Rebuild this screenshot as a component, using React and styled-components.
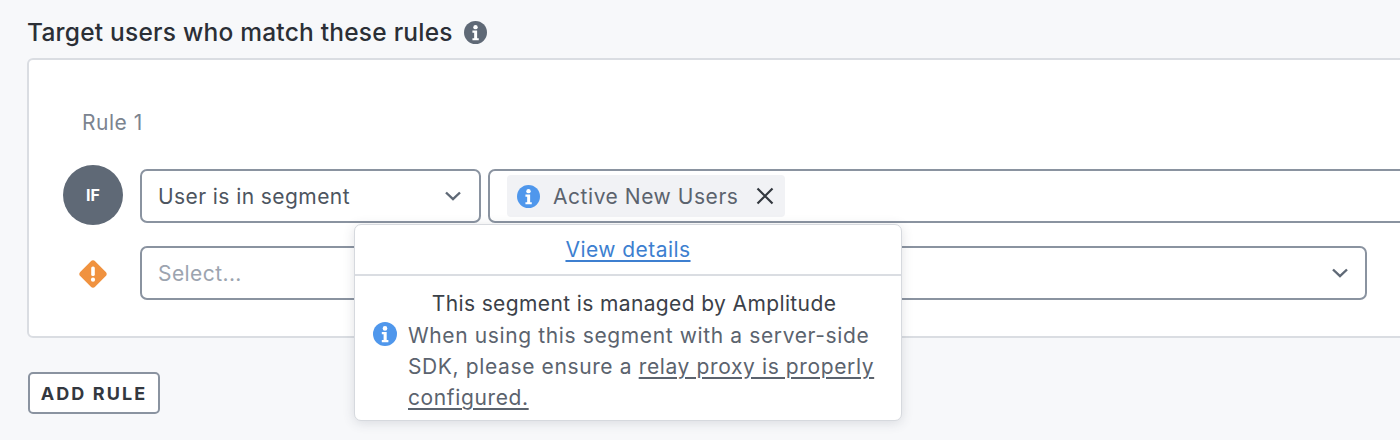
import React from "react";
import styled, { createGlobalStyle } from "styled-components";

const Global = createGlobalStyle`
  html, body { margin: 0; padding: 0; width: 1400px; height: 440px; overflow: hidden; background: #f7f8fa; }
  body { font-family: Inter, "Liberation Sans", sans-serif; -webkit-font-smoothing: antialiased; }
`;
const Page = styled.div`
  width: 1400px; height: 440px; box-sizing: border-box; padding: 16px 0 0 27px; overflow: hidden;
`;
const Heading = styled.div`
  display: flex; align-items: center; gap: 11px; height: 32px; margin-bottom: 10px;
`;
const Title = styled.h2`
  margin: 0; font-size: 24.5px; font-weight: 500; color: #2b2f36; line-height: 32px; letter-spacing: .22px;
`;
const Card = styled.section`
  position: relative; box-sizing: border-box; width: 1400px; height: 280px;
  background: #fff; border: 2px solid #dadde2; border-radius: 6px; padding: 50px 0 0 34px;
`;
const RuleLabel = styled.div`
  margin-left: 19px; font-size: 21px; letter-spacing: .5px; line-height: 26px; color: #7b8490; height: 26px; margin-bottom: 29px;
`;
const Row = styled.div`
  display: flex; align-items: center; height: ${p => p.$h}px; margin-bottom: ${p => p.$mb || 0}px;
`;
const Lead = styled.div`
  width: 60px; margin-right: 17px; margin-top: ${p => p.$mt || 0}px; display: flex; justify-content: center; align-items: center; flex: none;
`;
const IfBadge = styled.div`
  width: 60px; height: 60px; border-radius: 50%; background: #5f6976; color: #fff;
  display: flex; align-items: center; justify-content: center; font-size: 16px; font-weight: 700;
`;
const Control = styled.div`
  box-sizing: border-box; flex: none; width: ${p => p.$w}px; height: 54px;
  margin-right: ${p => p.$mr || 0}px; margin-top: ${p => p.$mt || 0}px;
  display: flex; align-items: center; justify-content: space-between;
  border: 2px solid #8a93a0; border-radius: 7px; background: #fff; padding: 0 ${p => p.$pr ?? 17}px 0 16px;
  font-size: 21px; letter-spacing: .42px; color: ${p => p.$muted ? "#9ca4af" : "#4d5560"};
`;
const Tag = styled.div`
  width: 278px; height: 42px; box-sizing: border-box; display: flex; align-items: center; gap: 13px;
  background: #f1f2f5; border-radius: 4px; padding: 0 10px; font-size: 21px; letter-spacing: .55px; color: #5b636e; white-space: nowrap;
`;
const TagClose = styled.svg`margin-left: 3px; flex: none;`;
const ValueBox = styled(Control)`justify-content: flex-start; padding-left: 17px;`;
const Popup = styled.div`
  position: absolute; left: 325px; top: 164px; width: 548px; height: 197px; box-sizing: border-box;
  background: #fff; border: 1px solid #d6d9de; border-radius: 7px; box-shadow: 0 2px 12px rgba(60,70,85,.16);
`;
const PopupHeader = styled.div`
  height: 51px; box-sizing: border-box; border-bottom: 2px solid #dadde2;
  display: flex; align-items: center; justify-content: center;
`;
const DetailsLink = styled.a`
  color: #3d7fd0; font-size: 21px; letter-spacing: .45px; text-decoration: underline; text-underline-offset: 3px;
`;
const PopupBody = styled.div`
  padding: 12px 18px 0 18px;
`;
const Managed = styled.div`
  text-align: center; font-size: 21px; letter-spacing: .38px; line-height: 32px; color: #3b4149; padding-left: 12px;
`;
const Note = styled.div`
  display: flex; align-items: flex-start; gap: 11px;
`;
const NoteIcon = styled.div`flex: none; padding-top: 2px; line-height: 0;`;
const NoteText = styled.div`
  font-size: 21px; letter-spacing: .62px; line-height: 31px; color: #5b636e;
  a { color: inherit; text-decoration: underline; text-underline-offset: 3px; }
`;
const AddRule = styled.button`
  display: block; box-sizing: border-box; margin-top: 34px; margin-left: 1px; width: 132px; height: 42px; padding: 0;
  background: #fff; border: 2px solid #8a93a0; border-radius: 5px;
  font-family: inherit; font-size: 18px; font-weight: 700; letter-spacing: 2.1px; color: #33383f;
`;

const InfoIcon = ({ color, size }) => (
  <svg width={size} height={size} viewBox="0 0 24 24" style={{ flex: "none", display: "block" }}>
    <circle cx="12" cy="12" r="12" fill={color} />
    <circle cx="12" cy="6.4" r="2.3" fill="#fff" />
    <path d="M8.8 10h4.9v8h1.7v2.2H8.8V18h1.8v-5.8H8.8z" fill="#fff" />
  </svg>
);
const Chevron = () => (
  <svg width="20" height="20" viewBox="0 0 20 20" fill="none">
    <path d="M3 6.5 10 13.2l7-6.7" stroke="#5f6976" strokeWidth="2.4" />
  </svg>
);
const WarnIcon = () => (
  <svg width="30" height="30" viewBox="0 0 30 30">
    <path d="M15 1.2c.9 0 1.5.4 2.1 1l10.7 10.7c1.2 1.2 1.2 3 0 4.2L17.1 27.8c-1.2 1.2-3 1.2-4.2 0L2.2 17.1c-1.2-1.2-1.2-3 0-4.2L12.9 2.2c.6-.6 1.2-1 2.1-1z" fill="#f0923f" />
    <rect x="13.2" y="7.5" width="3.6" height="9.5" rx="1.6" fill="#fff" />
    <circle cx="15" cy="20.7" r="2.1" fill="#fff" />
  </svg>
);

export default function App() {
  return (
    <Page>
      <Global />
      <Heading>
        <Title>Target users who match these rules</Title>
        <InfoIcon color="#5f6976" size={23} />
      </Heading>
      <Card>
        <RuleLabel>Rule 1</RuleLabel>
        <Row $h={60} $mb={21}>
          <Lead><IfBadge>IF</IfBadge></Lead>
          <Control $w={341} $mr={7} $mt={2} $pr={16}>
            User is in segment
            <Chevron />
          </Control>
          <ValueBox $w={1000} $mt={2}>
            <Tag>
              <InfoIcon color="#4f97ec" size={23} />
              Active New Users
              <TagClose width="20" height="20" viewBox="0 0 20 20" fill="none">
                <path d="M2.5 2.5l15 15M17.5 2.5l-15 15" stroke="#33383f" strokeWidth="2.2" />
              </TagClose>
            </Tag>
          </ValueBox>
        </Row>
        <Row $h={54}>
          <Lead $mt={2}><WarnIcon /></Lead>
          <Control $w={1227} $muted $pr={15}>
            Select...
            <Chevron />
          </Control>
        </Row>
        <Popup>
          <PopupHeader><DetailsLink href="#">View details</DetailsLink></PopupHeader>
          <PopupBody>
            <Managed>This segment is managed by Amplitude</Managed>
            <Note>
              <NoteIcon><InfoIcon color="#4f97ec" size={24} /></NoteIcon>
              <NoteText>
                When using this segment with a server-side SDK, please ensure a <a href="#">relay proxy is properly configured.</a>
              </NoteText>
            </Note>
          </PopupBody>
        </Popup>
      </Card>
      <AddRule>ADD RULE</AddRule>
    </Page>
  );
}
